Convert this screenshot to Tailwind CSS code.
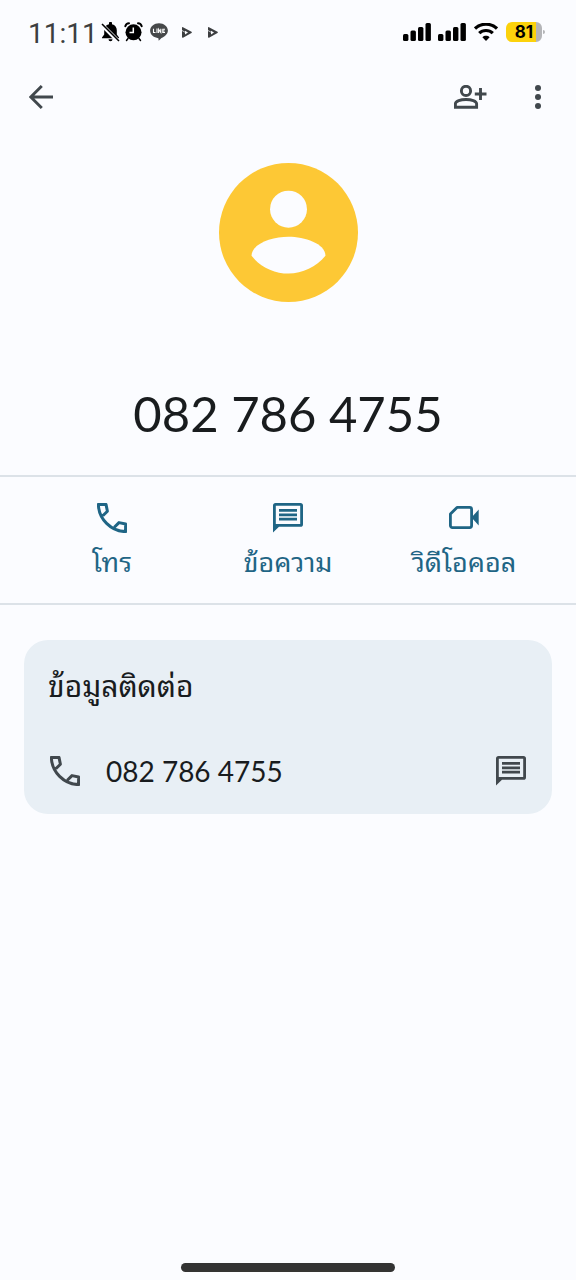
<!DOCTYPE html>
<html lang="th">
<head>
<meta charset="utf-8">
<meta name="viewport" content="width=device-width, initial-scale=1">
<title>082 786 4755</title>
<script src="https://cdn.jsdelivr.net/npm/@tailwindcss/browser@4"></script>
</head>
<body class="flex min-h-screen flex-col bg-[#fbfcff] font-['Lato','Noto_Sans_Thai_Looped','Loma','Garuda','Waree','Noto_Sans_Thai',sans-serif] text-[#191c1e]">
  <svg class="hidden" aria-hidden="true">
    <symbol id="phone" viewBox="0 0 30 30"><path d="M5.8 12.8 10.4 8.2 9 1.4H1.4C1.6 16 14 28.4 28.6 28.6V21L22 19.6l-4.7 4.7" fill="none" stroke="currentColor" stroke-width="3" stroke-linejoin="round"/></symbol>
    <symbol id="message" viewBox="0 0 30 30"><path fill="currentColor" fill-rule="evenodd" d="M2.6 0h24.8A2.6 2.6 0 0 1 30 2.6v18.6a2.6 2.6 0 0 1-2.6 2.6H6L0 29.5V2.6A2.6 2.6 0 0 1 2.6 0ZM2.8 2.8V21h24.4V2.8ZM6 6h18v2.8H6Zm0 4.4h18v2.8H6ZM6 14.8h18v2.8H6Z"/></symbol>
    <symbol id="play" viewBox="0 0 10 11"><path fill="currentColor" fill-rule="evenodd" d="M0 .8Q0-.2 1 .2L9.500 4.800Q10.200 5.400 9.500 6L1 10.700Q0 11 0 10ZM3 3.800v3.600L6 5.500Z"/><path d="M0 3.500 3.500 5.500" stroke="#fbfcff" stroke-width=".7"/></symbol>
  </svg>

  <div class="flex h-16 items-center justify-between pr-[31px] pl-7">
    <div class="flex items-center text-[#3c3e40]">
      <span class="mt-1 w-[73px] font-['Roboto',sans-serif] text-[28px] leading-8">11:11</span>
      <svg class="mr-1 h-5 w-[19px] text-black" viewBox="0 0 19 20" aria-hidden="true">
        <path fill="currentColor" d="M8 1.2a1.5 1.5 0 0 1 3 0v1c3.2.7 4.8 3.2 4.8 6v4.3l2.200 3v.8H1v-.8l2.200-3V8.200c0-2.800 1.600-5.300 4.800-6ZM7.500 17.300h4a2 2 0 0 1-4 0Z"/>
        <path d="M.5 2.500 16.500 18.500" stroke="#fbfcff" stroke-width="4"/><path d="M1 2 18 19" stroke="currentColor" stroke-width="1.600"/>
      </svg>
      <svg class="mr-[7px] h-5 w-[19px] text-black" viewBox="0 0 19 20" aria-hidden="true">
        <g fill="none" stroke="currentColor" stroke-linecap="round"><path d="M1.300 4.200A4 4 0 0 1 5 1.200M17.700 4.200A4 4 0 0 0 14 1.200" stroke-width="2"/><path d="M4 16.500 2.500 18.500M15 16.500l1.500 2" stroke-width="1.500"/></g>
        <circle cx="9.500" cy="10.300" r="8" fill="currentColor"/><path d="M9.300 5.500v5H5.500" fill="none" stroke="#fff" stroke-width="1.500"/>
      </svg>
      <svg class="mr-3.5 h-[18px] w-[18px]" viewBox="0 0 18 18" role="img" aria-label="LINE">
        <path fill="#46484a" d="M9 .2c4.900 0 8.900 3.400 8.900 7.400 0 3.500-3.200 6.300-6.400 7.400L8.700 17.700l-.3-2.500C3.900 14.900.1 11.700.1 7.600.1 3.600 4.100.2 9 .2Z"/>
        <path d="M3.500 5.800v3.700h2M7 5.500v4.500M8.600 10v-3.800l2.200 3.300v-3.700M15 6.300h-2.200v3.200H15M12.800 8h1.800" fill="none" stroke="#fff" stroke-width="1.100"/>
      </svg>
      <svg class="mr-4 h-[11px] w-2.5" aria-hidden="true"><use href="#play"/></svg>
      <svg class="h-[11px] w-2.5" aria-hidden="true"><use href="#play"/></svg>
    </div>
    <div class="flex items-center text-black">
      <svg class="mr-[7px] h-[18px] w-7" viewBox="0 0 28 18" fill="currentColor" aria-hidden="true"><rect y="11" width="5.400" height="7" rx="1.500"/><rect x="7.500" y="7.500" width="5.400" height="10.500" rx="1.500"/><rect x="15" y="4" width="5.400" height="14" rx="1.500"/><rect x="22.500" width="5.400" height="18" rx="1.500"/></svg>
      <svg class="mr-2 h-[18px] w-7" viewBox="0 0 28 18" fill="currentColor" aria-hidden="true"><rect y="11" width="5.400" height="7" rx="1.500"/><rect x="7.500" y="7.500" width="5.400" height="10.500" rx="1.500"/><rect x="15" y="4" width="5.400" height="14" rx="1.500"/><rect x="22.500" width="5.400" height="18" rx="1.500"/></svg>
      <svg class="mr-2 h-[18px] w-6" viewBox="0 0 24 18" aria-hidden="true"><path d="M1 5.500C7-.2 17-.2 23 5.500M5.200 10.200c3.800-3.600 9.800-3.600 13.600 0" fill="none" stroke="currentColor" stroke-width="3.200"/><path fill="currentColor" d="M12 18 8.400 14.200c2-1.900 5.200-1.900 7.200 0Z"/></svg>
      <div class="flex h-5 w-9 items-center justify-center rounded-md bg-linear-to-r from-[#fcd20c] from-82% to-[#b4b5b8] to-82% font-['Inter',sans-serif] text-[17px] font-bold leading-5">81</div>
      <span class="ml-px h-1 w-0.5 rounded-r bg-[#b4b5b8]"></span>
    </div>
  </div>

  <header class="flex h-[66px] items-center justify-between pr-[22px] pl-[21px] text-[#41484d]">
    <button type="button" aria-label="ย้อนกลับ" class="flex h-10 w-10 items-center justify-center">
      <svg class="h-6 w-6" viewBox="0 0 24 24" aria-hidden="true"><path d="M24 12H2M12.800 1 1.800 12l11 11" fill="none" stroke="currentColor" stroke-width="2.900"/></svg>
    </button>
    <div class="flex items-center gap-[35px]">
      <button type="button" aria-label="เพิ่มรายชื่อติดต่อ" class="flex h-10 items-center">
        <svg class="h-6 w-[33px]" viewBox="0 0 33 24" fill="none" stroke="currentColor" stroke-width="2.900" aria-hidden="true"><circle cx="12" cy="5.900" r="4.600"/><path d="M1.400 22.200v-3.400c0-5.800 21.200-5.800 21.200 0v3.400ZM26.500 3v12M20.800 9H32.500"/></svg>
      </button>
      <button type="button" aria-label="ตัวเลือกเพิ่มเติม" class="flex h-10 w-8 items-center justify-center">
        <svg class="h-6 w-1.5" viewBox="0 0 6 24" fill="currentColor" aria-hidden="true"><circle cx="3" cy="3" r="3"/><circle cx="3" cy="12" r="3"/><circle cx="3" cy="21" r="3"/></svg>
      </button>
    </div>
  </header>

  <main>
    <section class="flex flex-col items-center pt-[33px]">
      <svg class="h-[139px] w-[139px]" viewBox="0 0 140 140" aria-hidden="true"><circle cx="70" cy="70" r="70" fill="#fdc835"/><g fill="#fbfcff"><circle cx="70" cy="46.500" r="18.600"/><path d="M32.800 93.500C32.800 81 54 74.300 70 74.300s37.200 6.700 37.200 19.200C98 105 84 111.300 70 111.300S42 105 32.800 93.500Z"/></g></svg>
      <h1 class="mt-[81px] mb-8 text-[49px] leading-[60px]">082 786 4755</h1>
    </section>

    <nav class="grid h-[130px] grid-cols-3 border-y-2 border-[#dce2e8] px-6 text-[#1f6585]">
      <button type="button" class="flex flex-col items-center gap-[11px] pt-[26px]">
        <svg class="h-[30px] w-[30px]" aria-hidden="true"><use href="#phone"/></svg>
        <span class="text-[27px] leading-9">โทร</span>
      </button>
      <button type="button" class="flex flex-col items-center gap-[11px] pt-[26px]">
        <svg class="h-[30px] w-[30px]" aria-hidden="true"><use href="#message"/></svg>
        <span class="text-[27px] leading-9">ข้อความ</span>
      </button>
      <button type="button" class="flex flex-col items-center gap-[11px] pt-[26px]">
        <svg class="h-[30px] w-[30px]" viewBox="0 0 30 30" aria-hidden="true"><path d="M8 4.400h12.600a2 2 0 0 1 2 2v16.200a2 2 0 0 1-2 2H3.400a2 2 0 0 1-2-2V11Z" fill="none" stroke="currentColor" stroke-width="2.800" stroke-linejoin="round"/><path d="m22.500 14.500 7.200-8v16Z" fill="currentColor"/></svg>
        <span class="text-[27px] leading-9">วิดีโอคอล</span>
      </button>
    </nav>

    <section class="mx-6 mt-[35px] rounded-3xl bg-[#e8eff5] px-6 pt-[27px] pb-5">
      <h2 class="text-[30px] leading-9">ข้อมูลติดต่อ</h2>
      <div class="mt-[45px] flex items-center justify-between">
        <a href="tel:0827864755" class="flex items-center gap-[26px] pl-0.5">
          <svg class="h-[30px] w-[30px] text-[#41484d]" aria-hidden="true"><use href="#phone"/></svg>
          <span class="text-[28px] leading-[46px]">082 786 4755</span>
        </a>
        <button type="button" aria-label="ส่งข้อความ" class="pr-0.5 text-[#41484d]"><svg class="h-[30px] w-[30px]" aria-hidden="true"><use href="#message"/></svg></button>
      </div>
    </section>
  </main>

  <div class="mx-auto mt-auto mb-2 h-[9px] w-[37%] rounded-full bg-[#333333]"></div>
</body>
</html>
